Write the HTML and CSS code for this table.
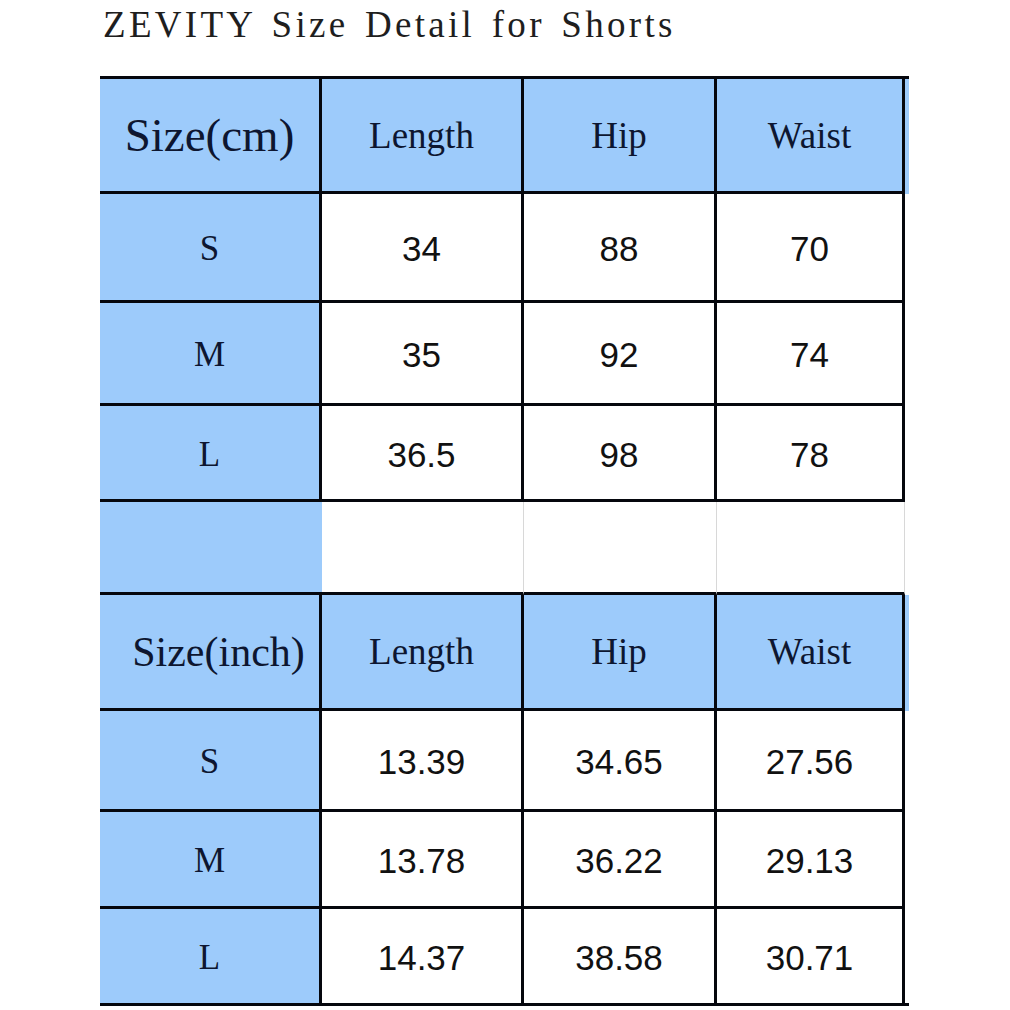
FILE: index.html
```html
<!DOCTYPE html>
<html>
<head>
<meta charset="utf-8">
<link rel="stylesheet" href="styles.css">
</head>
<body>
<div class="page">
  <div class="title">ZEVITY Size Detail for Shorts</div>
  <div class="grid">
    <div class="c hd big">Size(cm)</div>
    <div class="c hd">Length</div>
    <div class="c hd">Hip</div>
    <div class="c hd">Waist</div>
    <div class="x hdx"></div>

    <div class="c lb">S</div>
    <div class="c num">34</div>
    <div class="c num">88</div>
    <div class="c num">70</div>
    <div class="x"></div>

    <div class="c lb">M</div>
    <div class="c num">35</div>
    <div class="c num">92</div>
    <div class="c num">74</div>
    <div class="x"></div>

    <div class="c lb">L</div>
    <div class="c num">36.5</div>
    <div class="c num">98</div>
    <div class="c num">78</div>
    <div class="x"></div>

    <div class="c sp-first"></div>
    <div class="c sp"></div>
    <div class="c sp"></div>
    <div class="c sp"></div>
    <div class="x"></div>

    <div class="c hd mid">Size(inch)</div>
    <div class="c hd">Length</div>
    <div class="c hd">Hip</div>
    <div class="c hd">Waist</div>
    <div class="x hdx"></div>

    <div class="c lb">S</div>
    <div class="c num">13.39</div>
    <div class="c num">34.65</div>
    <div class="c num">27.56</div>
    <div class="x"></div>

    <div class="c lb">M</div>
    <div class="c num">13.78</div>
    <div class="c num">36.22</div>
    <div class="c num">29.13</div>
    <div class="x"></div>

    <div class="c lb">L</div>
    <div class="c num">14.37</div>
    <div class="c num">38.58</div>
    <div class="c num">30.71</div>
    <div class="x last"></div>
  </div>
</div>
</body>
</html>
```

FILE: styles.css
```css
html, body {
  margin: 0;
  padding: 0;
  background: #ffffff;
}

.page {
  width: 1010px;
  height: 1010px;
  overflow: hidden;
}

.title {
  height: 76px;
  padding-left: 103px;
  padding-top: 6px;
  box-sizing: border-box;
  font-family: "Liberation Serif", "Times New Roman", serif;
  font-size: 37px;
  line-height: 37px;
  letter-spacing: 3.3px;
  word-spacing: 4px;
  color: #1e1e1e;
  white-space: nowrap;
}

.grid {
  margin-left: 100px;
  width: 809px;
  display: grid;
  grid-template-columns: 222px 202px 193px 188px 4px;
  grid-template-rows: 115px 109px 103px 96px 93px 116px 101px 97px 97px;
  border-top: 3px solid #05070d;
}

.c {
  box-sizing: border-box;
  border-right: 3px solid #05070d;
  border-bottom: 3px solid #05070d;
  display: flex;
  align-items: center;
  justify-content: center;
  background: #ffffff;
}

.x {
  background: #ffffff;
}

.hdx {
  background: #9dcbfb;
}

.last {
  border-bottom: 3px solid #05070d;
  box-sizing: border-box;
}

.hd {
  background: #9dcbfb;
  font-family: "Liberation Serif", "Times New Roman", serif;
  font-size: 37px;
  color: #0d1630;
}

.big {
  font-size: 47px;
}

.mid {
  font-size: 42px;
  padding-left: 18px;
}

.lb {
  background: #9dcbfb;
  font-family: "Liberation Serif", "Times New Roman", serif;
  font-size: 35px;
  color: #0d1630;
  padding-top: 4px;
}

.num {
  font-family: "Liberation Sans", Arial, sans-serif;
  font-size: 35px;
  color: #111111;
  padding-top: 4px;
}

.sp-first {
  background: #9dcbfb;
  border-right: none;
}

.sp {
  border-right: 1px solid #d8d8d8;
}
```
